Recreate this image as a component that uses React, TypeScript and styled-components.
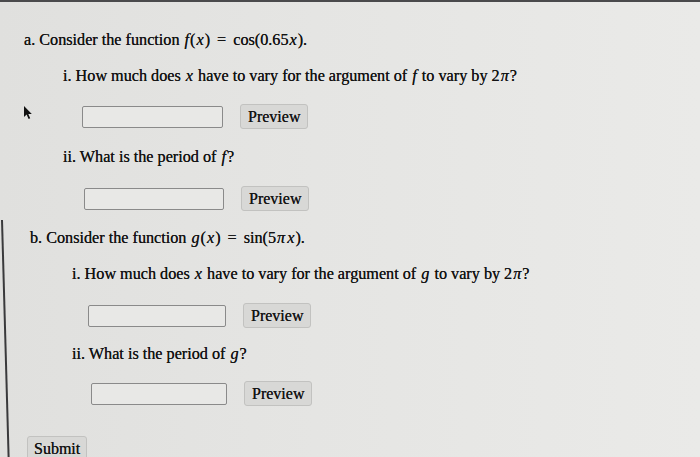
import React from 'react';
import styled, { createGlobalStyle } from 'styled-components';

const GlobalStyle = createGlobalStyle`
  html, body {
    margin: 0;
    padding: 0;
    height: 100%;
  }
  body {
    background: linear-gradient(90deg, #e0e0de 0%, #e5e5e3 45%, #eaeae8 100%);
    font-family: "Liberation Serif", "Times New Roman", serif;
    color: #131313;
    overflow: hidden;
  }
`;

const Screen = styled.div`
  position: relative;
  width: 700px;
  height: 457px;
  overflow: hidden;
  border-top: 2px solid #4a4a4c;
  box-sizing: border-box;
  padding-top: 28px;
`;

const Bezel = styled.div`
  position: absolute;
  left: 1px;
  top: 218px;
  width: 2px;
  height: 260px;
  background: #3a3a3c;
  transform: rotate(-1.6deg);
  transform-origin: top left;
`;

const Cursor = styled.svg`
  position: absolute;
  left: 23px;
  top: 104px;
`;

const Part = styled.section<{ $indent: number; $top?: number }>`
  padding-left: ${(p) => p.$indent}px;
  margin-top: ${(p) => p.$top ?? 0}px;
`;

const Prompt = styled.p<{ $indent?: number; $top?: number }>`
  margin: ${(p) => p.$top ?? 0}px 0 0 ${(p) => p.$indent ?? 0}px;
  font-size: 16.2px;
  line-height: 20px;
  white-space: nowrap;
  text-shadow: 0 0 0.4px #222;
`;

const MathVar = styled.i`
  font-family: "Liberation Serif", "DejaVu Serif", serif;
  font-style: italic;
  margin: 0 1px;
`;

const Eq = styled.span`
  margin: 0 7px;
`;

const AnswerRow = styled.div<{ $indent: number; $top: number }>`
  display: flex;
  align-items: center;
  gap: 17px;
  margin: ${(p) => p.$top}px 0 0 ${(p) => p.$indent}px;
  height: 25px;
`;

const AnswerInput = styled.input.attrs({ type: 'text' })<{ $w?: number }>`
  width: ${(p) => p.$w ?? 141}px;
  height: 22px;
  box-sizing: border-box;
  border: 1px solid #8a8a8a;
  border-radius: 2px;
  background: #e8e8e6;
  outline: none;
`;

const GrayButton = styled.button`
  height: 25px;
  padding: 0 7px;
  box-sizing: border-box;
  border: 1px solid #c2c2c0;
  border-radius: 3px;
  background: #d8d8d6;
  font-family: "Liberation Serif", "Times New Roman", serif;
  font-size: 16px;
  color: #141414;
  text-shadow: 0 0 0.4px #222;
  cursor: pointer;
`;

const SubmitButton = styled(GrayButton)`
  height: 25px;
  padding: 0 6px;
`;

const SubmitBar = styled.div<{ $indent: number; $top: number }>`
  margin: ${(p) => p.$top}px 0 0 ${(p) => p.$indent}px;
`;

export default function App() {
  return (
    <>
      <GlobalStyle />
      <Screen>
        <Part $indent={24}>
          <Prompt>
            a. Consider the function <MathVar>f</MathVar>(<MathVar>x</MathVar>)
            <Eq>=</Eq>cos(0.65<MathVar>x</MathVar>).
          </Prompt>
          <Prompt $indent={39} $top={16}>
            i. How much does <MathVar>x</MathVar> have to vary for the argument of{' '}
            <MathVar>f</MathVar> to vary by 2<MathVar>π</MathVar>?
          </Prompt>
          <AnswerRow $indent={58} $top={18}>
            <AnswerInput />
            <GrayButton>Preview</GrayButton>
          </AnswerRow>
          <Prompt $indent={39} $top={18}>
            ii. What is the period of <MathVar>f</MathVar>?
          </Prompt>
          <AnswerRow $indent={60} $top={19}>
            <AnswerInput $w={140} />
            <GrayButton>Preview</GrayButton>
          </AnswerRow>
        </Part>
        <Part $indent={30} $top={17}>
          <Prompt>
            b. Consider the function <MathVar>g</MathVar>(<MathVar>x</MathVar>)
            <Eq>=</Eq>sin(5<MathVar>π</MathVar><MathVar>x</MathVar>).
          </Prompt>
          <Prompt $indent={42} $top={16}>
            i. How much does <MathVar>x</MathVar> have to vary for the argument of{' '}
            <MathVar>g</MathVar> to vary by 2<MathVar>π</MathVar>?
          </Prompt>
          <AnswerRow $indent={58} $top={19}>
            <AnswerInput $w={138} />
            <GrayButton>Preview</GrayButton>
          </AnswerRow>
          <Prompt $indent={42} $top={16}>
            ii. What is the period of <MathVar>g</MathVar>?
          </Prompt>
          <AnswerRow $indent={61} $top={17}>
            <AnswerInput $w={136} />
            <GrayButton>Preview</GrayButton>
          </AnswerRow>
        </Part>
        <SubmitBar $indent={27} $top={30}>
          <SubmitButton>Submit</SubmitButton>
        </SubmitBar>
        <Bezel />
        <Cursor width="10" height="14" viewBox="0 0 10 14">
          <path d="M1 0 L1 11 L3.6 8.6 L5.6 13 L7.2 12.3 L5.3 8 L8.8 8 Z" fill="#111" />
        </Cursor>
      </Screen>
    </>
  );
}
